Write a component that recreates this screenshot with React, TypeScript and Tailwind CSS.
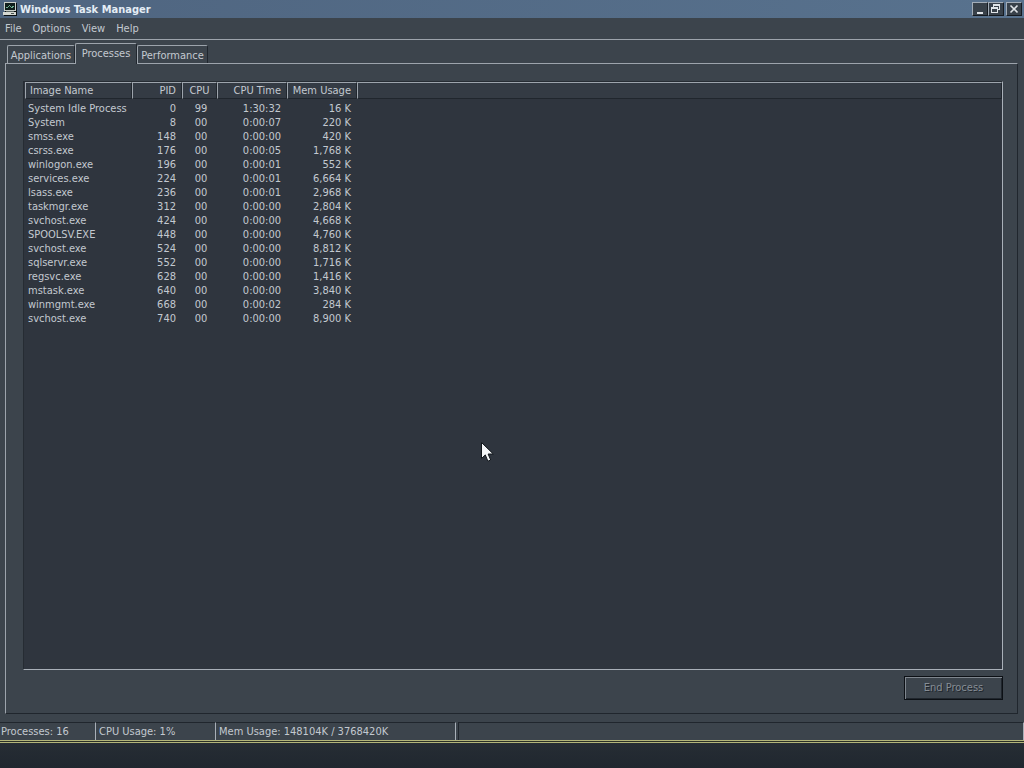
import { useState } from 'react'

interface Process {
  name: string
  pid: number
  cpu: string
  time: string
  mem: string
}

const PROCESSES: Process[] = [
  { name: 'System Idle Process', pid: 0, cpu: '99', time: '1:30:32', mem: '16 K' },
  { name: 'System', pid: 8, cpu: '00', time: '0:00:07', mem: '220 K' },
  { name: 'smss.exe', pid: 148, cpu: '00', time: '0:00:00', mem: '420 K' },
  { name: 'csrss.exe', pid: 176, cpu: '00', time: '0:00:05', mem: '1,768 K' },
  { name: 'winlogon.exe', pid: 196, cpu: '00', time: '0:00:01', mem: '552 K' },
  { name: 'services.exe', pid: 224, cpu: '00', time: '0:00:01', mem: '6,664 K' },
  { name: 'lsass.exe', pid: 236, cpu: '00', time: '0:00:01', mem: '2,968 K' },
  { name: 'taskmgr.exe', pid: 312, cpu: '00', time: '0:00:00', mem: '2,804 K' },
  { name: 'svchost.exe', pid: 424, cpu: '00', time: '0:00:00', mem: '4,668 K' },
  { name: 'SPOOLSV.EXE', pid: 448, cpu: '00', time: '0:00:00', mem: '4,760 K' },
  { name: 'svchost.exe', pid: 524, cpu: '00', time: '0:00:00', mem: '8,812 K' },
  { name: 'sqlservr.exe', pid: 552, cpu: '00', time: '0:00:00', mem: '1,716 K' },
  { name: 'regsvc.exe', pid: 628, cpu: '00', time: '0:00:00', mem: '1,416 K' },
  { name: 'mstask.exe', pid: 640, cpu: '00', time: '0:00:00', mem: '3,840 K' },
  { name: 'winmgmt.exe', pid: 668, cpu: '00', time: '0:00:02', mem: '284 K' },
  { name: 'svchost.exe', pid: 740, cpu: '00', time: '0:00:00', mem: '8,900 K' },
]

const TABS = [
  { label: 'Applications', width: 'w-[68px]' },
  { label: 'Processes', width: 'w-[62px]' },
  { label: 'Performance', width: 'w-[71px]' },
]

const headCell =
  'h-[17px] border-t border-l border-r border-b border-t-[#9da4ac] border-l-[#9da4ac] border-r-[#20262d] border-b-[#20262d] p-0 pt-px font-normal'

const captionButton =
  'flex h-[14px] w-4 items-center justify-center border border-t-[#a3adb8] border-l-[#a3adb8] border-r-[#161b21] border-b-[#161b21] bg-[#38414a]'

function MonitorIcon() {
  return (
    <svg width="16" height="16" viewBox="0 0 16 16" shapeRendering="crispEdges" aria-hidden="true">
      <path d="M2 1h12v9H2z" fill="#c9cec9" />
      <path d="M14 2h1v9H3v-1h11z" fill="#0b1012" />
      <path d="M3 2h10v7H3z" fill="#101e1c" />
      <path d="M4 6h2V5h1V4h1v1h1v1h1V5h2v1h-1v1H9V6H8V5H7v1H6v1H4z" fill="#6fae92" />
      <path d="M4 10h8v1H4z" fill="#5d6664" />
      <path d="M1 11h13v3H1z" fill="#d5d8d2" />
      <path d="M14 11h1v4h-1zM2 14h13v1H2z" fill="#0b1012" />
      <path d="M9 12h3v1H9z" fill="#4a5350" />
    </svg>
  )
}

function TitleBar() {
  return (
    <header className="flex h-[18px] items-center bg-linear-to-r from-[#4f6580] to-[#58728e] pl-[2px] pr-[2px]">
      <MonitorIcon />
      <h1 className="ml-[2px] flex-1 pt-px text-[11px] leading-[14px] font-bold text-[#e4edf5]">Windows Task Manager</h1>
      <button type="button" aria-label="Minimize" className={captionButton}>
        <svg width="12" height="12" viewBox="0 0 12 12" shapeRendering="crispEdges">
          <path d="M3 9h6v2H3z" fill="#dfe4e8" />
        </svg>
      </button>
      <button type="button" aria-label="Restore" className={captionButton}>
        <svg width="12" height="12" viewBox="0 0 12 12" shapeRendering="crispEdges">
          <path d="M3 1h7v6H8V6h1V3H4v1H3zM1 4h7v6H1zM2 6v3h5V6z" fillRule="evenodd" fill="#dfe4e8" />
        </svg>
      </button>
      <button type="button" aria-label="Close" className={`${captionButton} ml-[2px]`}>
        <svg width="12" height="12" viewBox="0 0 12 12">
          <path d="M2.5 2.5l7 7M9.5 2.5l-7 7" stroke="#dfe4e8" strokeWidth="1.6" />
        </svg>
      </button>
    </header>
  )
}

function MenuBar() {
  return (
    <nav className="flex h-[22px] items-center gap-[11px] border-b border-[#9da4ac] pl-[5px]">
      {['File', 'Options', 'View', 'Help'].map(item => (
        <button key={item} type="button">{item}</button>
      ))}
    </nav>
  )
}

function ProcessTable() {
  return (
    <table className="w-full table-fixed border-separate border-spacing-0">
      <colgroup>
        <col className="w-[107px]" />
        <col className="w-[50px]" />
        <col className="w-[35px]" />
        <col className="w-[70px]" />
        <col className="w-[70px]" />
        <col />
      </colgroup>
      <thead>
        <tr className="bg-[#343b44]">
          <th className={`${headCell} pl-1 text-left`}>Image Name</th>
          <th className={`${headCell} pr-[5px] text-right`}>PID</th>
          <th className={`${headCell} text-center`}>CPU</th>
          <th className={`${headCell} pr-[5px] text-right`}>CPU Time</th>
          <th className={`${headCell} pr-[5px] text-right`}>Mem Usage</th>
          <th className={headCell} aria-hidden="true" />
        </tr>
      </thead>
      <tbody>
        <tr aria-hidden="true"><td className="h-[3px] p-0" colSpan={6} /></tr>
        {PROCESSES.map(p => (
          <tr key={p.pid}>
            <td className="h-[14px] p-0 pl-[3px]">{p.name}</td>
            <td className="p-0 pr-[6px] text-right">{p.pid}</td>
            <td className="p-0 pl-[3px] text-center">{p.cpu}</td>
            <td className="p-0 pr-[6px] text-right">{p.time}</td>
            <td className="p-0 pr-[6px] text-right">{p.mem}</td>
            <td className="p-0" />
          </tr>
        ))}
      </tbody>
    </table>
  )
}

function StatusBar() {
  const cell = 'border-t border-r border-t-[#20262d] border-r-[#a9b0b8] pt-[2px]'
  return (
    <footer className="flex h-[18px]">
      <div className={`${cell} w-24 pl-px`}>Processes: 16</div>
      <div className={`${cell} w-[120px] pl-[3px]`}>CPU Usage: 1%</div>
      <div className={`${cell} w-[240px] pl-[3px]`}>Mem Usage: 148104K / 3768420K</div>
      <div className={`${cell} ml-[2px] flex-1 border-l border-l-[#20262d]`} />
    </footer>
  )
}

export default function App() {
  const [active, setActive] = useState('Processes')

  return (
    <div className="relative flex min-h-screen flex-col bg-[#3c444c] font-['DejaVu_Sans_Condensed','DejaVu_Sans',sans-serif] text-[11px] leading-[14px] text-[#c3c9d0] cursor-default">
      <TitleBar />
      <MenuBar />

      <main className="flex flex-1 flex-col pt-[3px] pr-[6px] pb-2 pl-[5px]">
        <div role="tablist" className="flex items-end pl-[2px]">
          {TABS.map(t => (
            <button
              key={t.label}
              type="button"
              role="tab"
              aria-selected={active === t.label}
              onClick={() => setActive(t.label)}
              className={`${t.width} rounded-t-[2px] border-t border-r border-l border-t-[#9da4ac] border-l-[#9da4ac] border-r-[#20262d] text-center whitespace-nowrap ${
                active === t.label ? 'relative z-10 -mb-px h-[21px] bg-[#3c444c]' : 'h-[18px] pt-[2px]'
              }`}
            >
              {t.label}
            </button>
          ))}
        </div>

        <section className="flex flex-1 flex-col border border-t-[#9da4ac] border-r-[#20262d] border-b-[#20262d] border-l-[#9da4ac] pt-[17px] pr-[14px] pb-[13px] pl-[17px]">
          <div className="flex-1 border border-t-[#262c33] border-r-[#a9b0b8] border-b-[#a9b0b8] border-l-[#262c33] bg-[#2f353e] pl-px">
            <ProcessTable />
          </div>
          <button
            type="button"
            disabled
            className="mt-[6px] h-6 w-[99px] self-end border border-[#0c1015] text-[#868d95] shadow-[inset_1px_1px_0_#7f868e,inset_-1px_-1px_0_#20262d] [text-shadow:1px_1px_0_#20262d]"
          >
            End Process
          </button>
        </section>
      </main>

      <StatusBar />
      <div className="h-[3px] border-t border-b border-[#b3b579] bg-[#2b3027]" />
      <div className="h-[25px] bg-linear-to-b from-[#262d34] to-[#20272f]" />

      <svg
        className="pointer-events-none absolute top-[442px] left-[481px]"
        width="14"
        height="21"
        viewBox="0 0 14 21"
        aria-hidden="true"
      >
        <path d="M.5 .5v16l3.8-3.6 2.6 6.3 2.8-1.2-2.6-6h5.2z" fill="#f4f6f8" stroke="#11161b" />
      </svg>
    </div>
  )
}
